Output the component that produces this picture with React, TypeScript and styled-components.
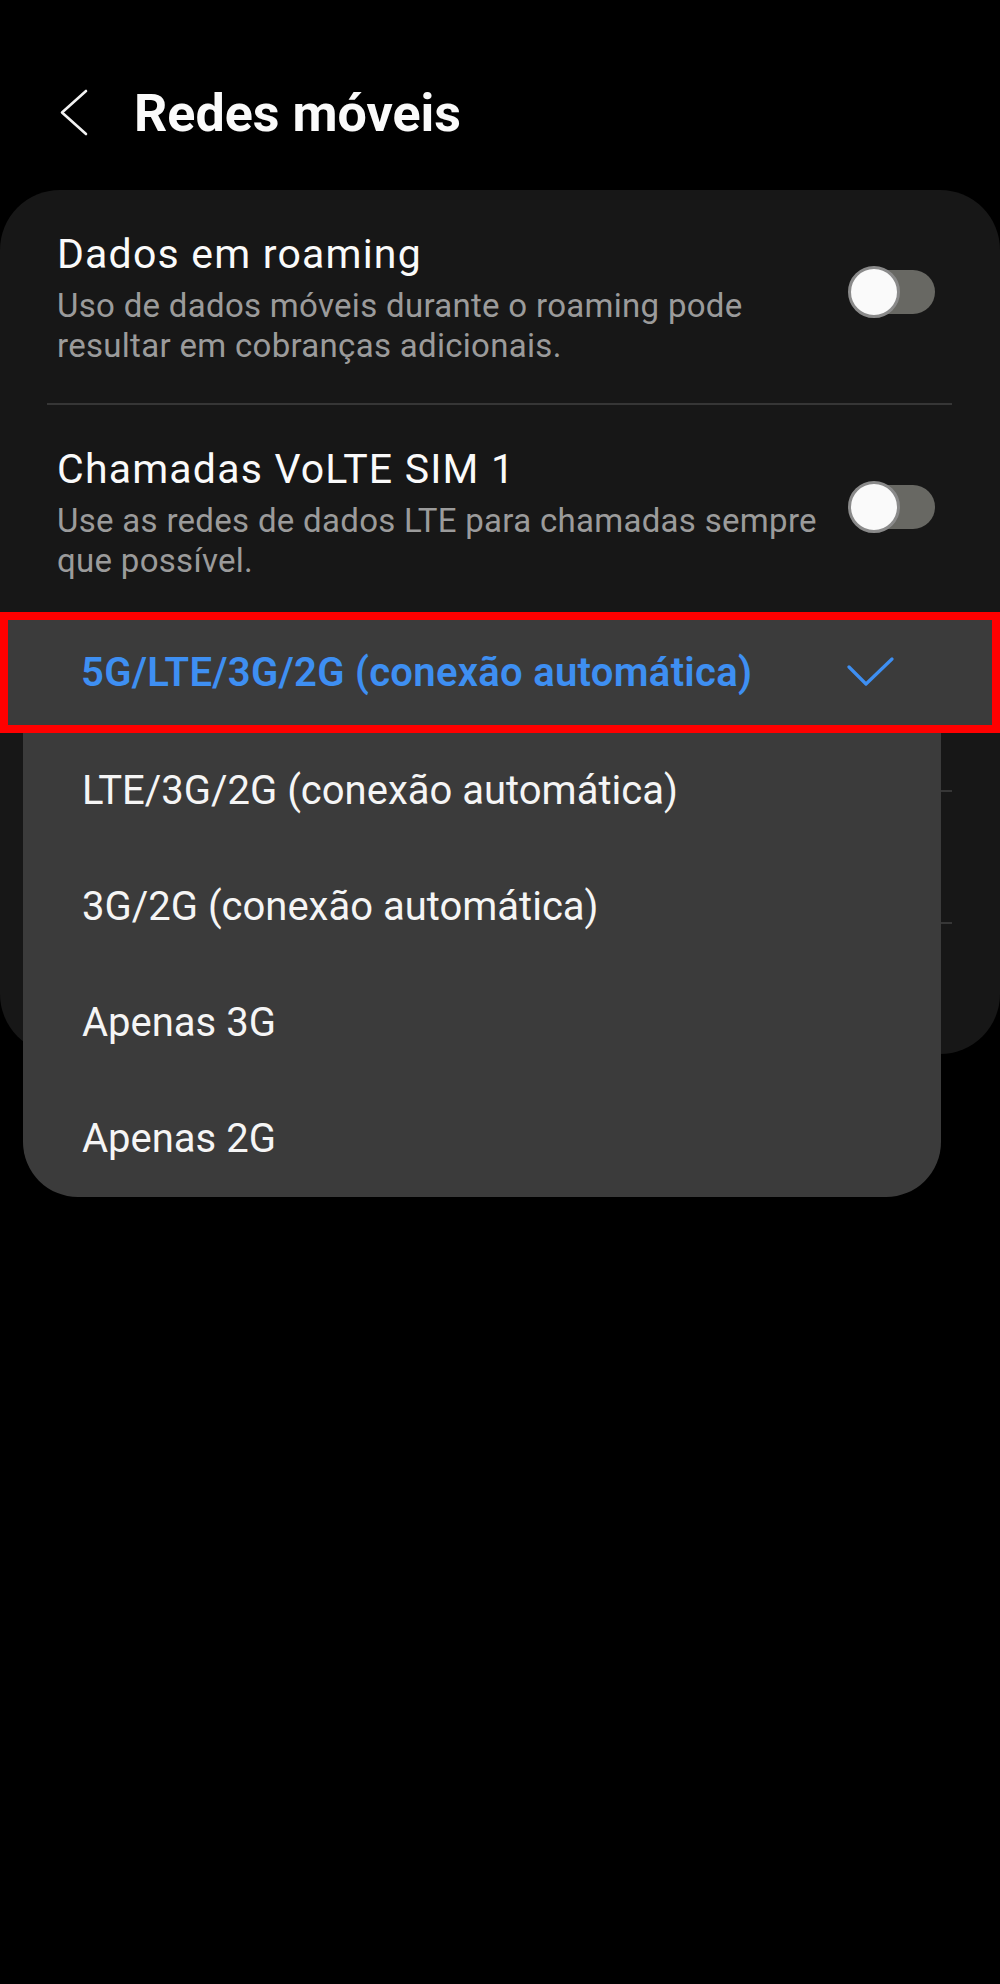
import React from 'react';
import styled, { createGlobalStyle } from 'styled-components';

const GlobalStyle = createGlobalStyle`
  html, body {
    margin: 0;
    padding: 0;
    background: #000;
  }
  body {
    font-family: Roboto, "Noto Sans", "Liberation Sans", sans-serif;
    color: #fafafa;
  }
`;

const Screen = styled.div`
  position: relative;
  width: 1000px;
  min-height: 1984px;
  background: #000;
`;

const Header = styled.header`
  display: flex;
  align-items: center;
  height: 64px;
  padding: 82px 0 44px 60px;
  gap: 46px;
`;

const BackIcon = styled.svg`
  width: 28px;
  height: 48px;
  margin-top: -3px;
`;

const Title = styled.h1`
  margin: 0;
  font-size: 52px;
  line-height: 64px;
  font-weight: 700;
  color: #fafafa;
  white-space: nowrap;
`;

const Card = styled.section`
  background: #171717;
  border-radius: 60px;
  overflow: hidden;
`;

const Row = styled.div`
  display: flex;
  align-items: center;
  justify-content: space-between;
  gap: 24px;
  padding: 39px 65px 37px 57px;
`;

// rows that sit under the open menu: only their dividers show at the edge
const CoveredRow = styled.div<{ $height: number }>`
  height: ${(p) => p.$height}px;
`;

const RowText = styled.div`
  display: flex;
  flex-direction: column;
  min-width: 0;
`;

const RowTitle = styled.div`
  font-size: 41px;
  line-height: 50px;
  letter-spacing: 1.2px;
  color: #fafafa;
  white-space: nowrap;
`;

const RowSub = styled.div`
  margin-top: 7px;
  font-size: 33px;
  line-height: 40px;
  letter-spacing: 0.3px;
  color: #9b9b9b;
  white-space: nowrap;
`;

const Divider = styled.hr`
  margin: 0 48px 0 47px;
  border: none;
  height: 2px;
  background: #363636;
`;

const Switch = styled.div`
  position: relative;
  flex: none;
  width: 87px;
  height: 52px;
  margin-bottom: 12px;
`;

const Track = styled.div`
  position: absolute;
  left: 7px;
  top: 4px;
  width: 80px;
  height: 44px;
  border-radius: 22px;
  background: #686863;
`;

const Thumb = styled.div`
  position: absolute;
  left: 0;
  top: 0;
  width: 46px;
  height: 46px;
  border-radius: 50%;
  background: #fafafa;
  border: 3px solid #8a8a8a;
`;

const Menu = styled.div`
  position: absolute;
  top: 612px;
  left: 23px;
  width: 918px;
  background: #3b3b3b;
  border-radius: 0 0 55px 55px;
`;

const SelectedItem = styled.div`
  display: flex;
  align-items: center;
  justify-content: space-between;
  margin: 0 -59px 0 -23px;
  height: 105px;
  padding: 0 98px 0 73px;
  border: 8px solid #ff0000;
  background: #3b3b3b;
  font-size: 40px;
  font-weight: 600;
  letter-spacing: 0.3px;
  color: #3e8ff2;
  white-space: nowrap;
`;

const MenuItem = styled.div`
  height: 116px;
  padding-left: 59px;
  font-size: 40px;
  line-height: 116px;
  color: #f5f5f5;
  white-space: nowrap;
`;

const Check = styled.svg`
  width: 48px;
  height: 32px;
  flex: none;
`;

const Toggle = () => (
  <Switch>
    <Track />
    <Thumb />
  </Switch>
);

const OPTIONS = [
  'LTE/3G/2G (conexão automática)',
  '3G/2G (conexão automática)',
  'Apenas 3G',
  'Apenas 2G',
];

export default function App() {
  return (
    <Screen>
      <GlobalStyle />
      <Header>
        <BackIcon viewBox="0 0 28 48" fill="none">
          <polyline points="26,2 2,23.5 26,45" stroke="#f2f2f2" strokeWidth="2.6" strokeLinecap="round" strokeLinejoin="round" />
        </BackIcon>
        <Title>Redes móveis</Title>
      </Header>

      <Card>
        <Row>
          <RowText>
            <RowTitle>Dados em roaming</RowTitle>
            <RowSub>
              Uso de dados móveis durante o roaming pode
              <br />
              resultar em cobranças adicionais.
            </RowSub>
          </RowText>
          <Toggle />
        </Row>
        <Divider />
        <Row>
          <RowText>
            <RowTitle>Chamadas VoLTE SIM 1</RowTitle>
            <RowSub>
              Use as redes de dados LTE para chamadas sempre
              <br />
              que possível.
            </RowSub>
          </RowText>
          <Toggle />
        </Row>
        <Divider />
        <CoveredRow $height={170} />
        <Divider />
        <CoveredRow $height={130} />
        <Divider />
        <CoveredRow $height={130} />
      </Card>

      <Menu>
        <SelectedItem>
          <span>5G/LTE/3G/2G (conexão automática)</span>
          <Check viewBox="0 0 48 32" fill="none">
            <polyline points="3,10 20,27 46,2" stroke="#3e8ff2" strokeWidth="3.2" strokeLinecap="round" strokeLinejoin="round" />
          </Check>
        </SelectedItem>
        {OPTIONS.map((label) => (
          <MenuItem key={label}>{label}</MenuItem>
        ))}
      </Menu>
    </Screen>
  );
}
